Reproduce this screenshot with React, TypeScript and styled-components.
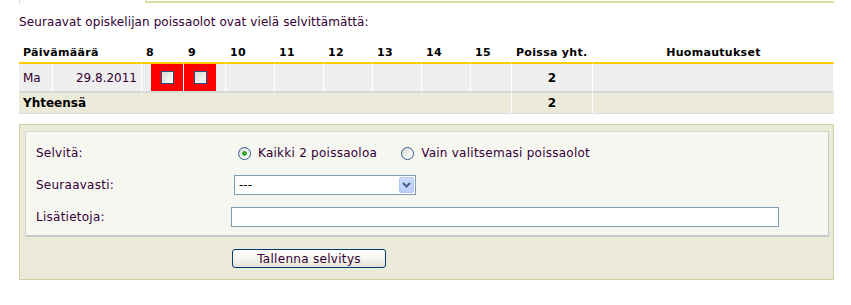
import React from "react"
import styled, { createGlobalStyle } from "styled-components"

const GlobalStyle = createGlobalStyle`
    * {
        box-sizing: border-box;
    }
    body {
        margin: 0;
        background: #ffffff;
        font-family: "DejaVu Sans", Verdana, sans-serif;
        font-size: 11px;
        color: #330033;
    }
`

const colors = {
    text: "#330033",
    strong: "#000000",
    gold: "#ffcc00",
    rowGray: "#efefef",
    beige: "#ecebda",
    panelBorder: "#cfcfa6",
    inputBorder: "#7f9db9",
    red: "#ff0000",
}

const Page = styled.div`
    width: 834px;
    padding-left: 19px;
`

const PrevPanelEdge = styled.div`
    display: flex;
    height: 3px;
`

const PrevStub = styled.div`
    width: 126px;
    border-left: 1px solid #dcdcb4;
`

const PrevBox = styled.div`
    flex: 1;
    border-left: 1px solid #d6d6a0;
    border-bottom: 2px solid #dcdca0;
`

const Intro = styled.p`
    margin: 12px 0 13px 0;
    line-height: 14px;
    font-size: 12px;
    letter-spacing: 0.1px;
`

const Grid = styled.div`
    display: grid;
    grid-template-columns: 34px 89px 42px 42px 49px 49px 49px 49px 49px 41px 81px 241px;
    width: 815px;
`

type Align = "left" | "center" | "right"

const justify = (a?: Align) =>
    a === "center" ? "center" : a === "right" ? "flex-end" : "flex-start"

const HeadCell = styled.div<{ $span?: number; $align?: Align }>`
    grid-column: span ${({ $span }) => $span ?? 1};
    display: flex;
    align-items: center;
    justify-content: ${({ $align }) => justify($align)};
    height: 22px;
    padding: 0 3px 0 4px;
    font-weight: bold;
    letter-spacing: 0.3px;
    color: ${colors.strong};
    border-bottom: 2px solid ${colors.gold};
    border-right: 1px solid #ffffff;
    white-space: nowrap;
    &:last-child {
        border-right: 0;
    }
`

const BodyCell = styled.div<{ $align?: Align; $flush?: boolean }>`
    display: flex;
    align-items: center;
    justify-content: ${({ $align }) => justify($align)};
    height: 29px;
    padding: ${({ $flush }) => ($flush ? "0" : "0 4px")};
    background: ${colors.rowGray};
    border-right: 1px solid #ffffff;
    border-bottom: 2px solid #d9d9d9;
    font-size: 12px;
    font-weight: ${({ $align }) => ($align === "center" ? "bold" : "normal")};
    color: ${({ $align }) => ($align === "center" ? colors.strong : colors.text)};
    &:last-child {
        border-right: 0;
    }
`

const AbsentMark = styled.div`
    display: flex;
    align-items: center;
    justify-content: center;
    width: 32px;
    height: 100%;
    background: ${colors.red};
`

const Checkbox = styled.input.attrs({ type: "checkbox" })`
    appearance: none;
    width: 13px;
    height: 13px;
    margin: 0;
    border: 1px solid #1c5180;
    background: linear-gradient(135deg, #d8d8d2 0%, #f4f4f1 70%, #ffffff 100%);
`

const TotalCell = styled.div<{ $span?: number; $align?: Align }>`
    grid-column: span ${({ $span }) => $span ?? 1};
    display: flex;
    align-items: center;
    justify-content: ${({ $align }) => justify($align)};
    height: 21px;
    padding: 0 4px;
    background: ${colors.beige};
    border-right: 1px solid #ffffff;
    border-bottom: 1px solid #dedede;
    font-size: 12px;
    font-weight: bold;
    color: ${colors.strong};
    &:last-child {
        border-right: 0;
    }
`

const FormPanel = styled.div`
    margin-top: 10px;
    width: 815px;
    background: ${colors.beige};
    border: 1px solid ${colors.panelBorder};
    padding: 6px 4px 0 5px;
    font-size: 12px;
    letter-spacing: 0.25px;
`

const FormInner = styled.div`
    display: grid;
    grid-template-columns: 195px 1fr;
    grid-auto-rows: 32px;
    align-items: center;
    padding: 5px 10px 2px 10px;
    background: #f7f7f2;
    border: 1px solid #d6d6cc;
    border-right-color: #c6c6c6;
    border-bottom: 2px solid #c9c9c9;
`

const Label = styled.label`
    color: ${colors.text};
`

const RadioGroup = styled.div`
    display: flex;
    align-items: center;
    padding-left: 7px;
`

const RadioOption = styled.label<{ $gap?: number }>`
    display: flex;
    align-items: center;
    gap: 7px;
    margin-right: ${({ $gap }) => $gap ?? 0}px;
`

const Radio = styled.input.attrs({ type: "radio" })`
    appearance: none;
    width: 13px;
    height: 13px;
    margin: 0;
    border-radius: 50%;
    border: 1px solid #2c5c8a;
    background: linear-gradient(135deg, #d6d6d0 0%, #f6f6f3 65%, #ffffff 100%);
    &:checked {
        background: radial-gradient(circle, #39b239 0, #2a9d2a 2px, transparent 2.6px),
            linear-gradient(135deg, #d6d6d0 0%, #f6f6f3 65%, #ffffff 100%);
    }
`

const SelectBox = styled.div`
    display: flex;
    align-items: stretch;
    width: 182px;
    height: 20px;
    margin-left: 3px;
    background: #ffffff;
    border: 1px solid ${colors.inputBorder};
`

const SelectNative = styled.select`
    flex: 1;
    appearance: none;
    border: 0;
    outline: 0;
    padding: 0 0 0 4px;
    background: transparent;
    font-family: inherit;
    font-size: 12px;
    color: #000000;
`

const ArrowButton = styled.span`
    display: flex;
    align-items: center;
    justify-content: center;
    width: 15px;
    margin: 1px;
    background: linear-gradient(180deg, #cddcfd 0%, #bccffa 100%);
    border: 1px solid #b3c5f3;
    border-radius: 2px;
`

const TextInput = styled.input`
    width: 548px;
    height: 20px;
    margin: 0;
    border: 1px solid ${colors.inputBorder};
    background: #ffffff;
`

const ButtonRow = styled.div`
    padding: 12px 0 11px 207px;
`

const SaveButton = styled.button`
    width: 154px;
    height: 19px;
    padding: 0;
    border: 1px solid #003c74;
    border-radius: 3px;
    background: linear-gradient(180deg, #ffffff 0%, #f5f4ef 55%, #e3e0d6 100%);
    font-family: inherit;
    font-size: 12px;
    letter-spacing: 0.3px;
    color: ${colors.text};
`

const hours = [8, 9, 10, 11, 12, 13, 14, 15]
const absent: Record<number, "left" | "right"> = { 8: "right", 9: "left" }

export default function App() {
    return (
        <Page>
            <GlobalStyle />
            <PrevPanelEdge>
                <PrevStub />
                <PrevBox />
            </PrevPanelEdge>
            <Intro>Seuraavat opiskelijan poissaolot ovat vielä selvittämättä:</Intro>

            <Grid>
                <HeadCell $span={2}>Päivämäärä</HeadCell>
                {hours.map((h) => (
                    <HeadCell key={h}>{h}</HeadCell>
                ))}
                <HeadCell>Poissa yht.</HeadCell>
                <HeadCell $align="center">Huomautukset</HeadCell>

                <BodyCell>Ma</BodyCell>
                <BodyCell $align="right">29.8.2011</BodyCell>
                {hours.map((h) =>
                    absent[h] ? (
                        <BodyCell key={h} $flush $align={absent[h]}>
                            <AbsentMark>
                                <Checkbox />
                            </AbsentMark>
                        </BodyCell>
                    ) : (
                        <BodyCell key={h} />
                    )
                )}
                <BodyCell $align="center">2</BodyCell>
                <BodyCell />

                <TotalCell $span={10}>Yhteensä</TotalCell>
                <TotalCell $align="center">2</TotalCell>
                <TotalCell />
            </Grid>

            <FormPanel>
                <FormInner>
                    <Label>Selvitä:</Label>
                    <RadioGroup>
                        <RadioOption $gap={24}>
                            <Radio name="selvita" defaultChecked />
                            Kaikki 2 poissaoloa
                        </RadioOption>
                        <RadioOption>
                            <Radio name="selvita" />
                            Vain valitsemasi poissaolot
                        </RadioOption>
                    </RadioGroup>

                    <Label>Seuraavasti:</Label>
                    <SelectBox>
                        <SelectNative defaultValue="">
                            <option value="">---</option>
                        </SelectNative>
                        <ArrowButton>
                            <svg width="9" height="6" viewBox="0 0 9 6">
                                <path
                                    d="M1 1 L4.5 4.5 L8 1"
                                    fill="none"
                                    stroke="#4d6185"
                                    strokeWidth="2"
                                />
                            </svg>
                        </ArrowButton>
                    </SelectBox>

                    <Label>Lisätietoja:</Label>
                    <TextInput type="text" />
                </FormInner>
                <ButtonRow>
                    <SaveButton>Tallenna selvitys</SaveButton>
                </ButtonRow>
            </FormPanel>
        </Page>
    )
}
